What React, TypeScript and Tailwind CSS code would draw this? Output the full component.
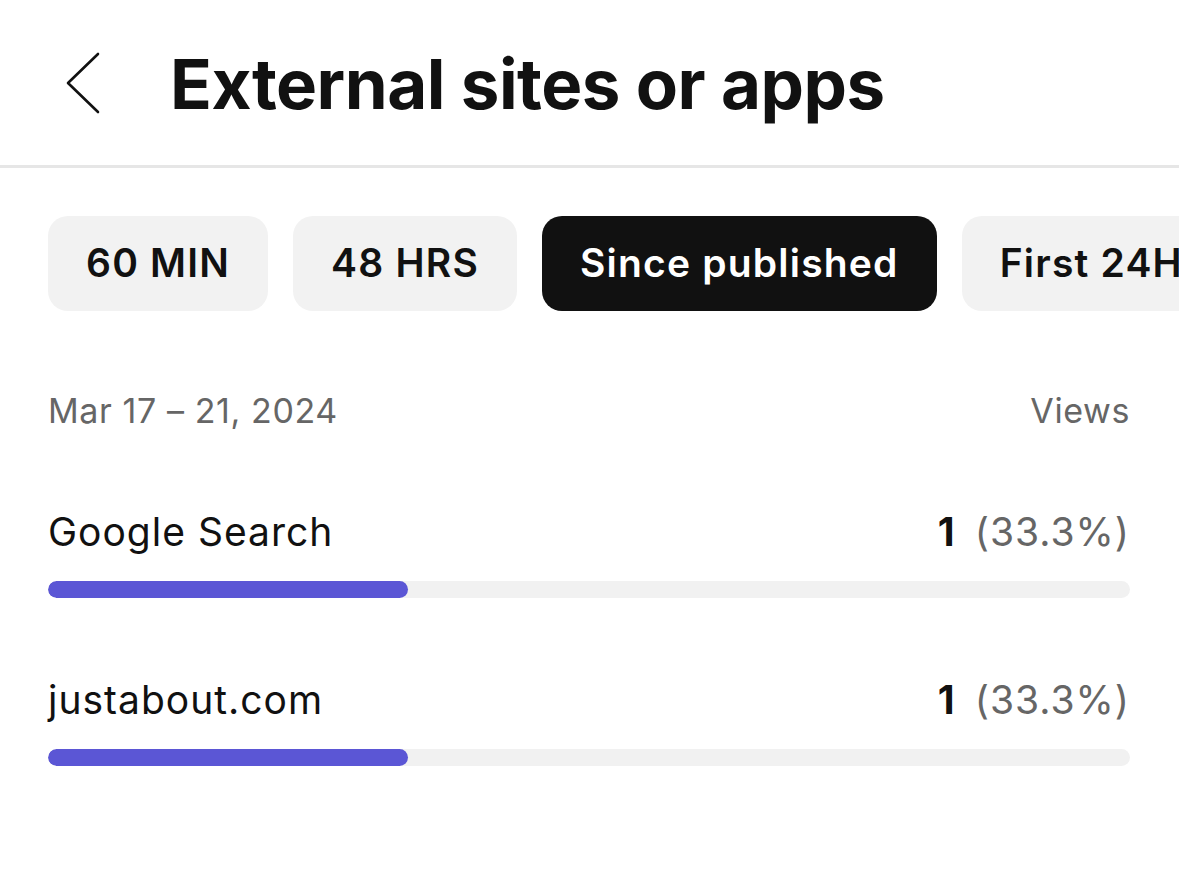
import React from "react";

const chips = [
  { label: "60 MIN", active: false },
  { label: "48 HRS", active: false },
  { label: "Since published", active: true },
  { label: "First 24H", active: false },
];

const rows = [
  { name: "Google Search", value: "1", pct: "(33.3%)", fill: 33.3 },
  { name: "justabout.com", value: "1", pct: "(33.3%)", fill: 33.3 },
];

export default function App() {
  return (
    <div
      className="w-[1179px] h-[876px] bg-white overflow-hidden text-[#111]"
      style={{ fontFamily: "Inter, 'Noto Sans', sans-serif" }}
    >
      <header className="h-[168px] flex items-center border-b-[3px] border-[#e6e6e6]">
        <div className="w-[170px] h-full flex items-center pl-[64px]">
          <svg width="40" height="62" viewBox="0 0 40 62" fill="none">
            <path d="M34 2 L4 31 L34 60" stroke="#111" strokeWidth="2.6" strokeLinecap="round" strokeLinejoin="round" />
          </svg>
        </div>
        <h1 className="text-[69px] font-bold tracking-[-0.5px] leading-none pt-[3px]">External sites or apps</h1>
      </header>

      <div className="flex gap-[25px] pl-[48px] mt-[48px] whitespace-nowrap">
        {chips.map((c) => (
          <div
            key={c.label}
            className={`h-[95px] shrink-0 rounded-[20px] flex items-center px-[38px] text-[39px] tracking-[1.2px] font-semibold ${
              c.active ? "bg-[#111] text-white" : "bg-[#f2f2f2] text-[#111]"
            }`}
          >
            {c.label}
          </div>
        ))}
      </div>

      <div className="px-[48px] pr-[49px] mt-[83px]">
        <div className="flex justify-between items-center text-[34px] tracking-[0.6px] text-[#666] leading-none">
          <span>Mar 17 – 21, 2024</span>
          <span>Views</span>
        </div>

        <div className="mt-[84px] flex flex-col gap-[82px]">
          {rows.map((r) => (
            <div key={r.name}>
              <div className="flex justify-between items-center text-[39px] tracking-[1px] leading-none">
                <span className="text-[#111]">{r.name}</span>
                <span className="flex items-baseline">
                  <span className="font-bold text-[#111]">{r.value}</span>
                  <span className="text-[#666] ml-[19px]">{r.pct}</span>
                </span>
              </div>
              <div className="mt-[30px] h-[17px] w-full rounded-full bg-[#f1f1f1] overflow-hidden">
                <div className="h-full rounded-full bg-[#5b56d5]" style={{ width: `${r.fill}%` }} />
              </div>
            </div>
          ))}
        </div>
      </div>
    </div>
  );
}
